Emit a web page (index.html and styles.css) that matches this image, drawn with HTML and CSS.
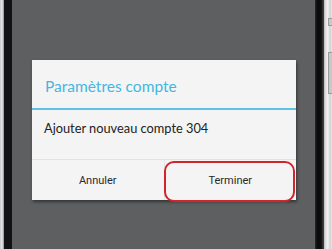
FILE: index.html
```html
<!DOCTYPE html>
<html>
<head>
<meta charset="utf-8">
<link rel="stylesheet" href="styles.css">
</head>
<body>
<div class="phone">
  <div class="bezel-left"></div>
  <div class="screen">
    <div class="dialog">
      <div class="title">Paramètres compte</div>
      <div class="body">Ajouter nouveau compte 304</div>
      <div class="actions">
        <div class="btn">Annuler</div>
        <div class="btn btn-right">Terminer</div>
      </div>
      <div class="highlight"></div>
    </div>
  </div>
  <div class="bezel-right">
    <div class="edge"></div>
    <div class="side">
      <div class="key key1"></div>
      <div class="key key2"></div>
    </div>
  </div>
</div>
</body>
</html>
```

FILE: styles.css
```css
html, body {
  margin: 0;
  padding: 0;
  width: 332px;
  height: 249px;
  overflow: hidden;
}
.phone {
  display: flex;
  height: 249px;
  background: #5e5f60;
}
.bezel-left {
  width: 4px;
  background: linear-gradient(90deg, #b9b9b9 0, #e6e6e6 1px, #cfcfcf 3px, #7a7a7a 4px);
  border-right: 8px solid #121314;
}
.screen {
  flex: 1;
  background: #5e5f60;
  padding: 60px 0 0 20px;
}
.bezel-right {
  display: flex;
  width: 17px;
}
.edge {
  width: 9px;
  background: linear-gradient(90deg, #2a2b2c 0, #0c0c0d 2px, #0c0c0d 6px, #3a3a3a 8px);
}
.side {
  flex: 1;
  position: relative;
  background: linear-gradient(90deg, #bdbdbd 0, #e4e4e4 2px, #f2f2f2 4px, #cfcfcf 6px, #e8e8e8 8px);
}
.key {
  position: absolute;
  right: 0;
  width: 3px;
  background: #c8c8c8;
  border: 1px solid #9a9a9a;
  border-right: none;
}
.key1 { top: 18px; height: 6px; }
.key2 { top: 52px; height: 40px; }
.dialog {
  position: relative;
  width: 264px;
  background: #f4f4f4;
  box-shadow: 1px 2px 3px rgba(0,0,0,0.45);
}
.title {
  height: 50px;
  box-sizing: border-box;
  padding: 15px 0 0 13px;
  font-family: "Lato", "Open Sans", sans-serif;
  font-size: 15.5px;
  color: #44b6e2;
  border-bottom: 2px solid #5dc1e6;
  line-height: 22px;
}
.body {
  height: 50px;
  box-sizing: border-box;
  padding: 9px 0 0 12px;
  font-family: "Lato", "Open Sans", sans-serif;
  font-size: 12.8px;
  color: #222;
  line-height: 18px;
  border-bottom: 1px solid #e2e2e2;
}
.actions {
  display: flex;
  height: 40px;
}
.btn {
  flex: 1;
  display: flex;
  align-items: center;
  justify-content: center;
  font-family: "Roboto", sans-serif;
  font-size: 11px;
  color: #2a2a2a;
  padding-top: 1px;
}
.btn-right {
  border-left: 1px solid #e6e6e6;
}
.highlight {
  position: absolute;
  left: 132px;
  top: 101px;
  width: 127px;
  height: 37px;
  border: 2.5px solid #d3242b;
  border-radius: 10px;
}
```
